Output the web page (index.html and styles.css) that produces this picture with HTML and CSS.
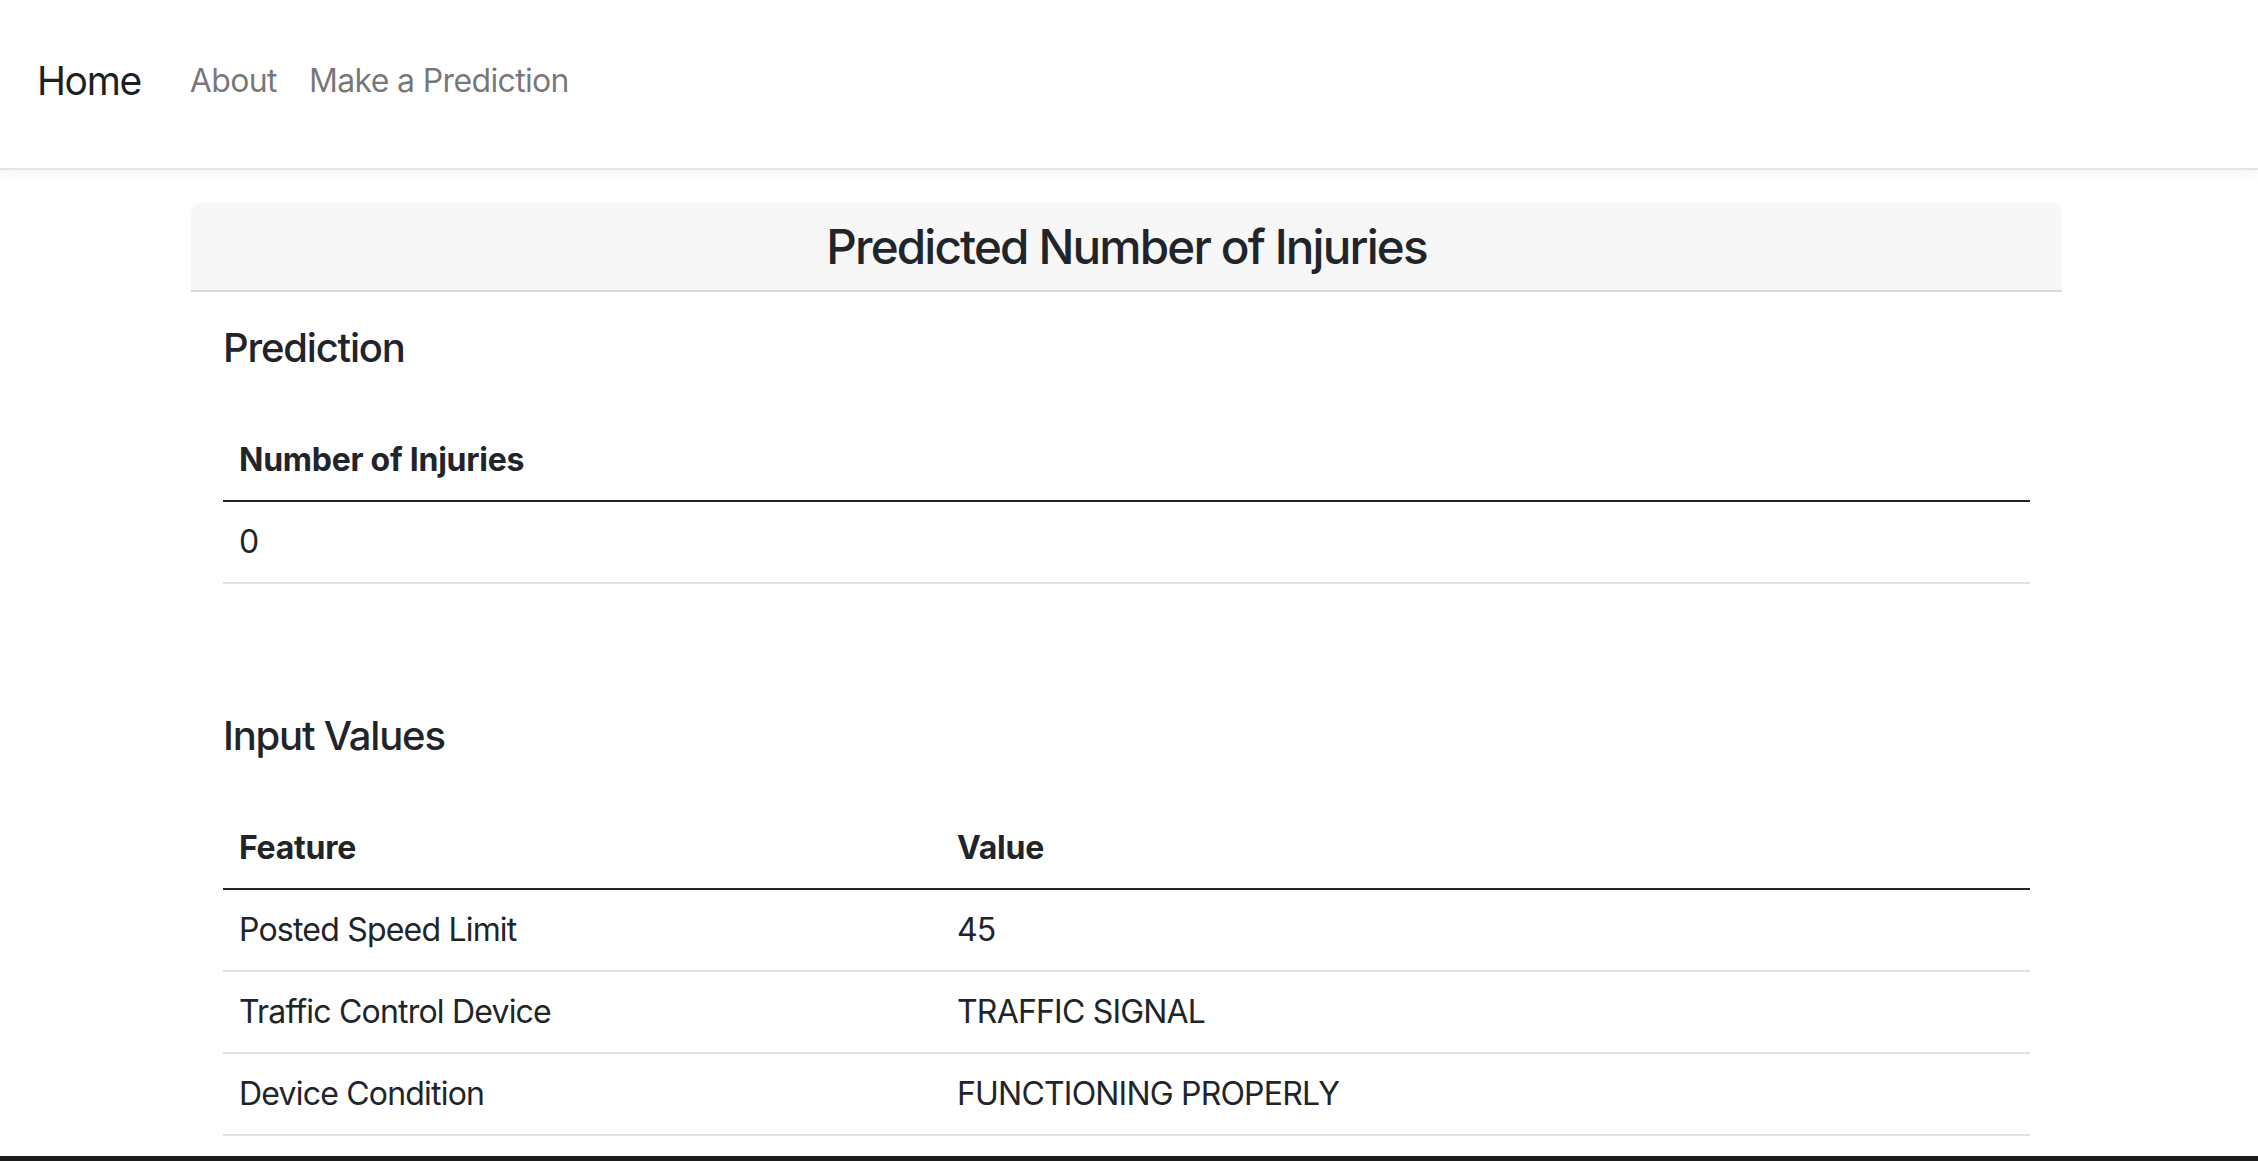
FILE: index.html
```html
<!DOCTYPE html>
<html lang="en">
<head>
<meta charset="utf-8">
<title>Predicted Number of Injuries</title>
<link rel="stylesheet" href="styles.css">
</head>
<body>
<nav class="navbar">
  <a class="brand" href="#">Home</a>
  <ul class="nav-links">
    <li><a class="nav-link" href="#">About</a></li>
    <li><a class="nav-link" href="#">Make a Prediction</a></li>
  </ul>
</nav>
<main class="container">
  <div class="card">
    <div class="card-header">
      <h4 class="card-title">Predicted Number of Injuries</h4>
    </div>
    <div class="card-body">
      <h5 class="section-title">Prediction</h5>
      <table class="table">
        <thead>
          <tr><th>Number of Injuries</th></tr>
        </thead>
        <tbody>
          <tr><td>0</td></tr>
        </tbody>
      </table>
      <h5 class="section-title section-gap">Input Values</h5>
      <table class="table table-two">
        <thead>
          <tr><th class="col-feature">Feature</th><th>Value</th></tr>
        </thead>
        <tbody>
          <tr><td>Posted Speed Limit</td><td>45</td></tr>
          <tr><td>Traffic Control Device</td><td>TRAFFIC SIGNAL</td></tr>
          <tr><td>Device Condition</td><td>FUNCTIONING PROPERLY</td></tr>
        </tbody>
      </table>
    </div>
  </div>
</main>
<div class="window-edge"></div>
</body>
</html>
```
FILE: styles.css
```css
* { box-sizing: border-box; }
html, body { margin: 0; padding: 0; }
body {
  font-family: Inter, "Noto Sans", "Liberation Sans", sans-serif;
  font-size: 32px;
  line-height: 1.5;
  letter-spacing: -0.025em;
  color: #212529;
  background: #fff;
  height: 1161px;
  overflow: hidden;
}
a { text-decoration: none; }

.navbar {
  height: 168px;
  display: flex;
  align-items: center;
  padding: 0 24px 6px 37px;
  background: #fff;
  box-shadow: 0 2px 0 #e1e4e8, 0 4px 14px rgba(0, 0, 0, 0.06);
  position: relative;
  z-index: 1;
}
.brand {
  font-size: 39px;
  line-height: 60px;
  letter-spacing: -0.035em;
  color: rgba(0, 0, 0, 0.9);
  margin-right: 33px;
}
.nav-links {
  display: flex;
  list-style: none;
  margin: 0;
  padding: 0;
}
.nav-link {
  display: block;
  padding: 0 16px;
  font-size: 32px;
  line-height: 48px;
  letter-spacing: -0.02em;
  color: rgba(0, 0, 0, 0.55);
}

.container {
  width: 1871px;
  margin: 35px 0 0 191px;
}
.card {
  background: #fff;
  border-radius: 10px;
}
.card-header {
  background: #f7f7f7;
  border-bottom: 2px solid #d9d9d9;
  border-radius: 10px 10px 0 0;
  padding: 15px 32px;
  text-align: center;
}
.card-title {
  margin: 0;
  font-size: 47.6px;
  line-height: 1.2;
  font-weight: 500;
  letter-spacing: -0.039em;
}
.card-body {
  padding: 32px;
}
.section-title {
  margin: 0 0 48px;
  font-size: 40px;
  line-height: 1.2;
  font-weight: 500;
  letter-spacing: -0.03em;
}
.section-gap {
  margin-top: 128px;
}
.table {
  width: 100%;
  border-collapse: collapse;
}
.table th, .table td {
  text-align: left;
  padding: 16px;
  line-height: 48px;
  vertical-align: bottom;
}
.table th {
  font-weight: 700;
  letter-spacing: -0.008em;
  border-bottom: 2px solid #212529;
}
.table td {
  border-bottom: 2px solid #dee2e6;
}
.col-feature { width: 718px; }

.window-edge {
  position: fixed;
  left: 0;
  right: 0;
  bottom: 0;
  height: 5px;
  background: #1c1c1c;
}
```
